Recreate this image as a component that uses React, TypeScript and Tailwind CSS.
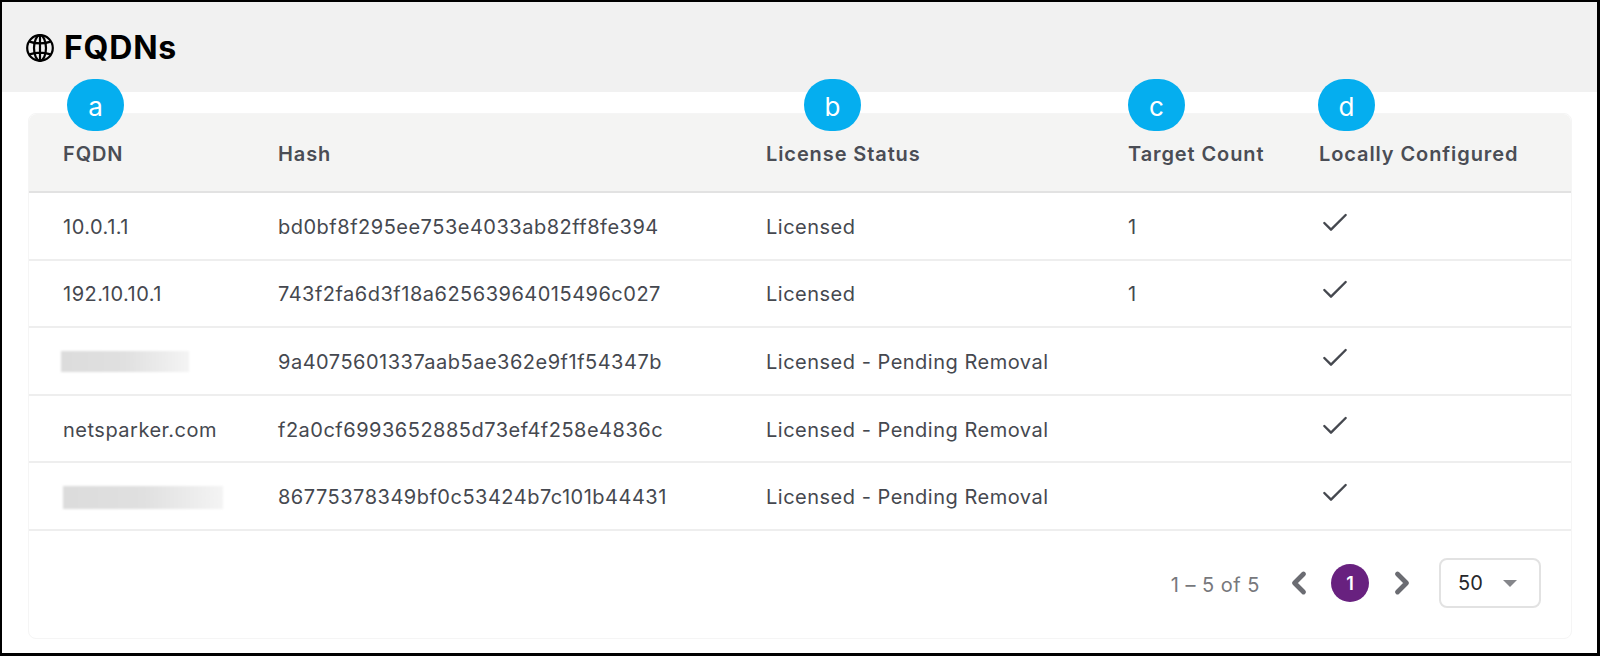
import { Check, ChevronLeft, ChevronRight } from "lucide-react";

const columns = "grid grid-cols-[215px_488px_362px_191px_1fr] items-center pl-[34px]";

const rows = [
  { fqdn: "10.0.1.1", hash: "bd0bf8f295ee753e4033ab82ff8fe394", status: "Licensed", count: "1" },
  { fqdn: "192.10.10.1", hash: "743f2fa6d3f18a62563964015496c027", status: "Licensed", count: "1" },
  { blur: "w-[128px] h-[21px] -ml-[2px]", hash: "9a4075601337aab5ae362e9f1f54347b", status: "Licensed - Pending Removal", count: "" },
  { fqdn: "netsparker.com", hash: "f2a0cf6993652885d73ef4f258e4836c", status: "Licensed - Pending Removal", count: "" },
  { blur: "w-[160px] h-[23px]", hash: "86775378349bf0c53424b7c101b44431", status: "Licensed - Pending Removal", count: "" },
];

function Badge({ label, className }: { label: string; className: string }) {
  return (
    <div className={`absolute top-[77px] w-[57px] h-[52px] rounded-full bg-[#05aeef] text-white text-[26px] leading-[56px] text-center ${className}`}>
      {label}
    </div>
  );
}

function GlobeIcon() {
  return (
    <svg width="30" height="30" viewBox="0 0 30 30" fill="none" stroke="currentColor" strokeWidth="2.2">
      <circle cx="15" cy="15" r="12.8" />
      <ellipse cx="15" cy="15" rx="6" ry="12.8" />
      <path d="M15 2.2v25.6M4.4 8.6q10.6 3.6 21.2 0M4.4 21.4q10.6-3.6 21.2 0" />
    </svg>
  );
}

export default function App() {
  return (
    <div className="relative h-[656px] w-[1600px] border-t-2 border-l-2 border-r-[3px] border-b-[3px] border-black bg-white flex flex-col font-['Inter',sans-serif]">
      {/* Title bar */}
      <div className="h-[90px] shrink-0 bg-[#f1f1f1] flex items-center pl-[23px] pt-[2px] gap-[9px] text-black">
        <GlobeIcon />
        <h1 className="text-[32px] font-bold leading-none tracking-[0.8px]">FQDNs</h1>
      </div>

      <Badge label="a" className="left-[65px]" />
      <Badge label="b" className="left-[802px]" />
      <Badge label="c" className="left-[1126px]" />
      <Badge label="d" className="left-[1316px]" />

      {/* Table card */}
      <div className="mt-[21px] ml-[26px] w-[1544px] h-[526px] rounded-lg border border-[#f5f5f5] flex flex-col">
        <div className={`${columns} h-[79px] shrink-0 pt-[3px] bg-[#f4f4f3] rounded-t-lg border-b-2 border-[#e2e2e2] text-[#4a4d55] text-[20px] font-semibold tracking-[0.9px]`}>
          <div>FQDN</div>
          <div>Hash</div>
          <div>License Status</div>
          <div>Target Count</div>
          <div>Locally Configured</div>
        </div>

        {rows.map((r) => (
          <div key={r.hash} className={`${columns} h-[67.6px] shrink-0 pt-[2px] border-b-2 border-[#eeeeee] text-[#45484f] text-[20px] tracking-[0.5px]`}>
            <div>
              {r.blur ? <div className={`${r.blur} bg-gradient-to-r from-[#dcdcdc] via-[#e0e0e0] to-[#f4f4f4] blur-[1px]`} /> : r.fqdn}
            </div>
            <div>{r.hash}</div>
            <div>{r.status}</div>
            <div>{r.count}</div>
            <div className="pb-[8px]">
              <Check size={32} strokeWidth={1.8} className="text-[#45484f]" />
            </div>
          </div>
        ))}

        {/* Pagination */}
        <div className="flex-1 flex items-center justify-end pr-[30px] pb-[2px] text-[20px]">
          <span className="text-[#77787c] mr-[21px] pt-[3px] tracking-[0.5px]">1 – 5 of 5</span>
          <ChevronLeft size={36} strokeWidth={3.2} className="text-[#6b6c72]" />
          <div className="ml-[14px] mr-[15px] w-[38px] h-[38px] rounded-full bg-[#68217f] text-white text-[18px] font-semibold flex items-center justify-center">1</div>
          <ChevronRight size={36} strokeWidth={3.2} className="text-[#6b6c72]" />
          <div className="ml-[19px] w-[102px] h-[50px] rounded-lg border-2 border-[#e2e2e2] flex items-center justify-between pl-[17px] pr-[22px] text-[#26272b]">
            <span>50</span>
            <span className="w-0 h-0 border-l-[7px] border-r-[7px] border-t-[7px] border-l-transparent border-r-transparent border-t-[#85868b]" />
          </div>
        </div>
      </div>
    </div>
  );
}
